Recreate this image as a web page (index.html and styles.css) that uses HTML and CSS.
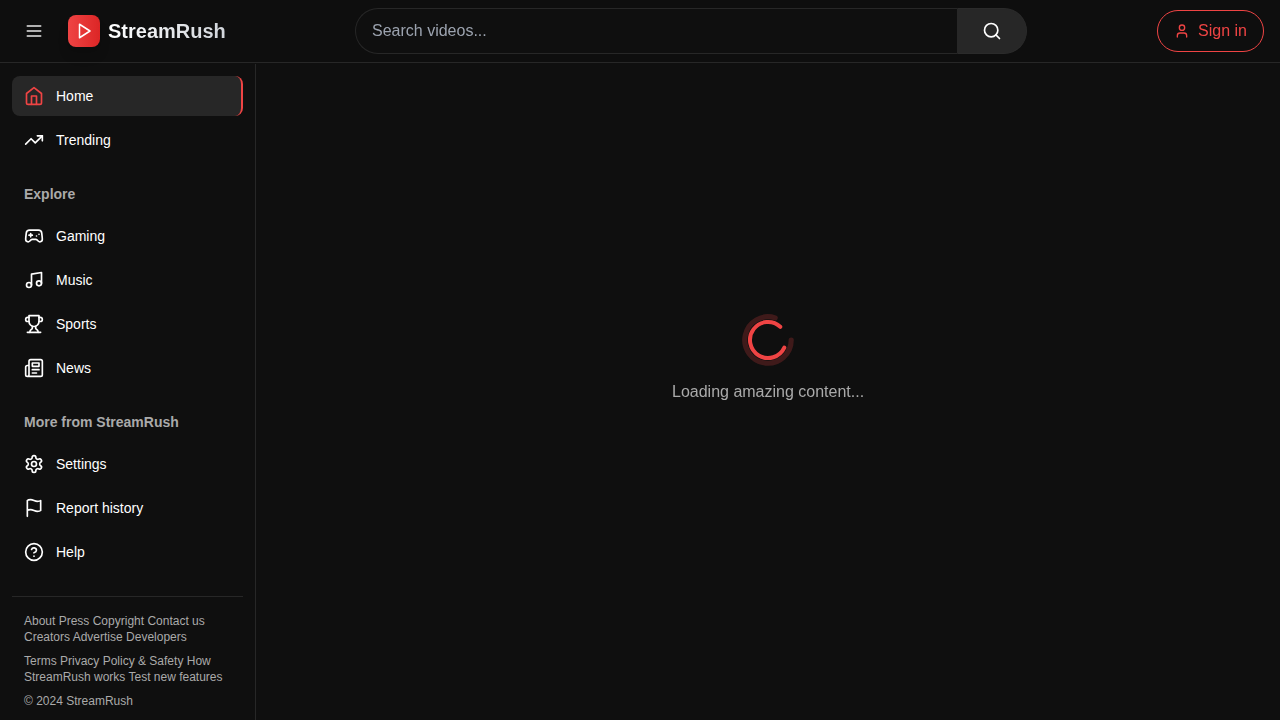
FILE: index.html
```html
<!DOCTYPE html>
<html lang="en">
<head>
<meta charset="utf-8">
<title>StreamRush</title>
<link rel="stylesheet" href="styles.css">
</head>
<body>
<header class="header">
  <div class="header-left">
    <button class="menu-button" aria-label="Menu"><svg class="icon" viewBox="0 0 24 24"><path d="M4 6h16M4 12h16M4 18h16"/></svg></button>
    <a class="brand">
      <span class="brand-mark"><svg class="icon" viewBox="0 0 24 24"><polygon points="6 3 20 12 6 21 6 3"/></svg></span>
      <span class="brand-name">StreamRush</span>
    </a>
  </div>
  <form class="search">
    <input class="search-input" type="text" placeholder="Search videos...">
    <button class="search-button" type="button" aria-label="Search"><svg class="icon" viewBox="0 0 24 24"><circle cx="11" cy="11" r="8"/><path d="m21 21-4.3-4.3"/></svg></button>
  </form>
  <button class="sign-in"><svg class="icon icon-small" viewBox="0 0 24 24"><path d="M19 21v-2a4 4 0 0 0-4-4H9a4 4 0 0 0-4 4v2"/><circle cx="12" cy="7" r="4"/></svg>Sign in</button>
</header>
<div class="body">
  <aside class="sidebar">
    <nav class="nav">
      <a class="nav-item active"><svg class="icon" viewBox="0 0 24 24"><path d="m3 9 9-7 9 7v11a2 2 0 0 1-2 2H5a2 2 0 0 1-2-2z"/><polyline points="9 22 9 12 15 12 15 22"/></svg>Home</a>
      <a class="nav-item"><svg class="icon" viewBox="0 0 24 24"><polyline points="22 7 13.5 15.5 8.5 10.5 2 17"/><polyline points="16 7 22 7 22 13"/></svg>Trending</a>
    </nav>
    <h3 class="nav-title">Explore</h3>
    <nav class="nav">
      <a class="nav-item"><svg class="icon" viewBox="0 0 24 24"><path d="M6 11h4M8 9v4M15 12h.01M18 10h.01"/><path d="M17.32 5H6.68a4 4 0 0 0-3.978 3.59c-.006.052-.01.101-.017.152C2.604 9.416 2 14.456 2 16a3 3 0 0 0 3 3c1 0 1.5-.5 2-1l1.414-1.414A2 2 0 0 1 9.828 16h4.344a2 2 0 0 1 1.414.586L17 18c.5.5 1 1 2 1a3 3 0 0 0 3-3c0-1.545-.604-6.584-.685-7.258-.007-.05-.011-.1-.017-.151A4 4 0 0 0 17.32 5z"/></svg>Gaming</a>
      <a class="nav-item"><svg class="icon" viewBox="0 0 24 24"><path d="M9 18V5l12-2v13"/><circle cx="6" cy="18" r="3"/><circle cx="18" cy="16" r="3"/></svg>Music</a>
      <a class="nav-item"><svg class="icon" viewBox="0 0 24 24"><path d="M6 9H4.5a2.5 2.5 0 0 1 0-5H6M18 9h1.500a2.500 2.500 0 0 0 0-5H18M4 22h16"/><path d="M10 14.660V17c0 .55-.47.98-.97 1.210C7.850 18.750 7 20.240 7 22M14 14.660V17c0 .55.47.98.97 1.210C16.150 18.750 17 20.240 17 22"/><path d="M18 2H6v7a6 6 0 0 0 12 0V2Z"/></svg>Sports</a>
      <a class="nav-item"><svg class="icon" viewBox="0 0 24 24"><path d="M4 22h16a2 2 0 0 0 2-2V4a2 2 0 0 0-2-2H8a2 2 0 0 0-2 2v16a2 2 0 0 1-2 2Zm0 0a2 2 0 0 1-2-2v-9c0-1.1.9-2 2-2h2"/><path d="M18 14h-8M15 18h-5M10 6h8v4h-8V6Z"/></svg>News</a>
    </nav>
    <h3 class="nav-title">More from StreamRush</h3>
    <nav class="nav">
      <a class="nav-item"><svg class="icon" viewBox="0 0 24 24"><path d="M12.220 2h-.44a2 2 0 0 0-2 2v.18a2 2 0 0 1-1 1.730l-.43.25a2 2 0 0 1-2 0l-.15-.08a2 2 0 0 0-2.730.730l-.22.380a2 2 0 0 0 .730 2.730l.150.100a2 2 0 0 1 1 1.720v.51a2 2 0 0 1-1 1.740l-.15.09a2 2 0 0 0-.73 2.730l.22.380a2 2 0 0 0 2.730.730l.15-.08a2 2 0 0 1 2 0l.43.25a2 2 0 0 1 1 1.730V20a2 2 0 0 0 2 2h.44a2 2 0 0 0 2-2v-.18a2 2 0 0 1 1-1.730l.43-.25a2 2 0 0 1 2 0l.15.08a2 2 0 0 0 2.730-.73l.22-.39a2 2 0 0 0-.73-2.730l-.15-.08a2 2 0 0 1-1-1.740v-.5a2 2 0 0 1 1-1.740l.15-.09a2 2 0 0 0 .73-2.730l-.22-.38a2 2 0 0 0-2.730-.73l-.15.08a2 2 0 0 1-2 0l-.43-.25a2 2 0 0 1-1-1.730V4a2 2 0 0 0-2-2z"/><circle cx="12" cy="12" r="3"/></svg>Settings</a>
      <a class="nav-item"><svg class="icon" viewBox="0 0 24 24"><path d="M4 15s1-1 4-1 5 2 8 2 4-1 4-1V3s-1 1-4 1-5-2-8-2-4 1-4 1zM4 22v-7"/></svg>Report history</a>
      <a class="nav-item"><svg class="icon" viewBox="0 0 24 24"><circle cx="12" cy="12" r="10"/><path d="M9.090 9a3 3 0 0 1 5.830 1c0 2-3 3-3 3M12 17h.01"/></svg>Help</a>
    </nav>
    <footer class="footer">
      <p>About Press Copyright Contact us Creators Advertise Developers</p>
      <p>Terms Privacy Policy &amp; Safety How StreamRush works Test new features</p>
      <p>© 2024 StreamRush</p>
    </footer>
  </aside>
  <main class="main">
    <div class="loader">
      <svg class="spinner" viewBox="0 0 24 24"><path class="spinner-echo" d="M21 12a9 9 0 1 1-6.219-8.56"/><path class="spinner-arc" d="M21 12a9 9 0 1 1-6.219-8.56"/></svg>
      <p class="loader-text">Loading amazing content...</p>
    </div>
  </main>
</div>
</body>
</html>
```
FILE: styles.css
```css
* { box-sizing: border-box; margin: 0; }
body {
  height: 720px;
  overflow: hidden;
  background: #0f0f0f;
  color: #fff;
  font: 16px/24px "Liberation Sans", Arial, sans-serif;
}
button { font: inherit; color: inherit; background: none; border: 0; padding: 0; }
.icon {
  display: block;
  flex: none;
  width: 20px;
  height: 20px;
  fill: none;
  stroke: currentColor;
  stroke-width: 2;
  stroke-linecap: round;
  stroke-linejoin: round;
}
.icon-small { width: 16px; height: 16px; }
.header {
  display: grid;
  grid-template-columns: 1fr 672px 1fr;
  align-items: center;
  height: 63px;
  padding: 0 16px;
  border-bottom: 1px solid #272727;
  will-change: transform;
  background: rgba(15, 15, 15, 0.95);
}
.header-left { display: flex; align-items: center; gap: 16px; width: 339px; }
.menu-button { padding: 8px; color: #e8e8e8; }
.brand { display: flex; align-items: center; gap: 8px; }
.brand-mark {
  display: flex;
  align-items: center;
  justify-content: center;
  width: 32px;
  height: 32px;
  border-radius: 8px;
  background: linear-gradient(to right, #ef4444, #dc2626);
  box-shadow: 0 10px 15px -3px rgba(0, 0, 0, 0.1), 0 4px 6px -4px rgba(0, 0, 0, 0.1);
}
.brand-mark .icon { width: 18px; height: 18px; }
.brand-name {
  font-size: 20px;
  line-height: 28px;
  font-weight: 700;
  color: transparent;
  background: linear-gradient(to right, #fff, #d1d5db);
  -webkit-background-clip: text;
  background-clip: text;
}
.search { display: flex; height: 46px; }
.search-input {
  flex: 1;
  min-width: 0;
  padding: 0 16px;
  border: 1px solid #272727;
  border-right: 0;
  border-radius: 23px 0 0 23px;
  background: #0f0f0f;
  color: #fff;
  font: inherit;
}
.search-input::placeholder { color: #9ca3af; }
.search-button {
  display: flex;
  align-items: center;
  justify-content: center;
  width: 70px;
  border: 1px solid #2b2b2b;
  border-left-color: #272727;
  border-radius: 0 23px 23px 0;
  background: #272727;
}
.sign-in {
  display: flex;
  align-items: center;
  justify-self: end;
  gap: 8px;
  height: 42px;
  padding: 0 16px;
  border: 1px solid #ef4444;
  border-radius: 21px;
  color: #ef4444;
}
.body { display: flex; height: 656px; margin-top: 1px; }
.sidebar {
  flex: none;
  width: 256px;
  padding: 12px;
  border-right: 1px solid #272727;
  overflow: hidden;
}
.nav { display: flex; flex-direction: column; gap: 4px; }
.nav-item {
  display: flex;
  align-items: center;
  gap: 12px;
  height: 40px;
  padding: 0 12px;
  border-radius: 8px;
  font-size: 14px;
  line-height: 20px;
}
.nav-item.active { background: #272727; border-right: 2px solid #ef4444; }
.nav-item.active .icon { color: #ef4444; }
.nav-title {
  margin: 24px 12px 12px;
  color: #aaa;
  font-size: 14px;
  line-height: 20px;
}
.footer {
  display: grid;
  gap: 8px;
  margin-top: 24px;
  padding: 16px 12px;
  border-top: 1px solid #272727;
  color: #aaa;
  font-size: 12px;
  line-height: 16px;
}
.main { flex: 1; display: flex; justify-content: center; padding-top: 252px; }
.loader { display: flex; flex-direction: column; align-items: center; gap: 16px; }
.spinner {
  width: 48px;
  height: 48px;
  overflow: visible;
  fill: none;
  stroke: #ef4444;
  stroke-width: 2;
  stroke-linecap: round;
  stroke-linejoin: round;
}
.spinner-echo { opacity: 0.22; transform-origin: 12px 12px; transform: scale(1.29); }
.spinner-arc { transform-origin: 12px 12px; transform: rotate(25deg); }
.loader-text { color: #aaa; will-change: transform; }
```
